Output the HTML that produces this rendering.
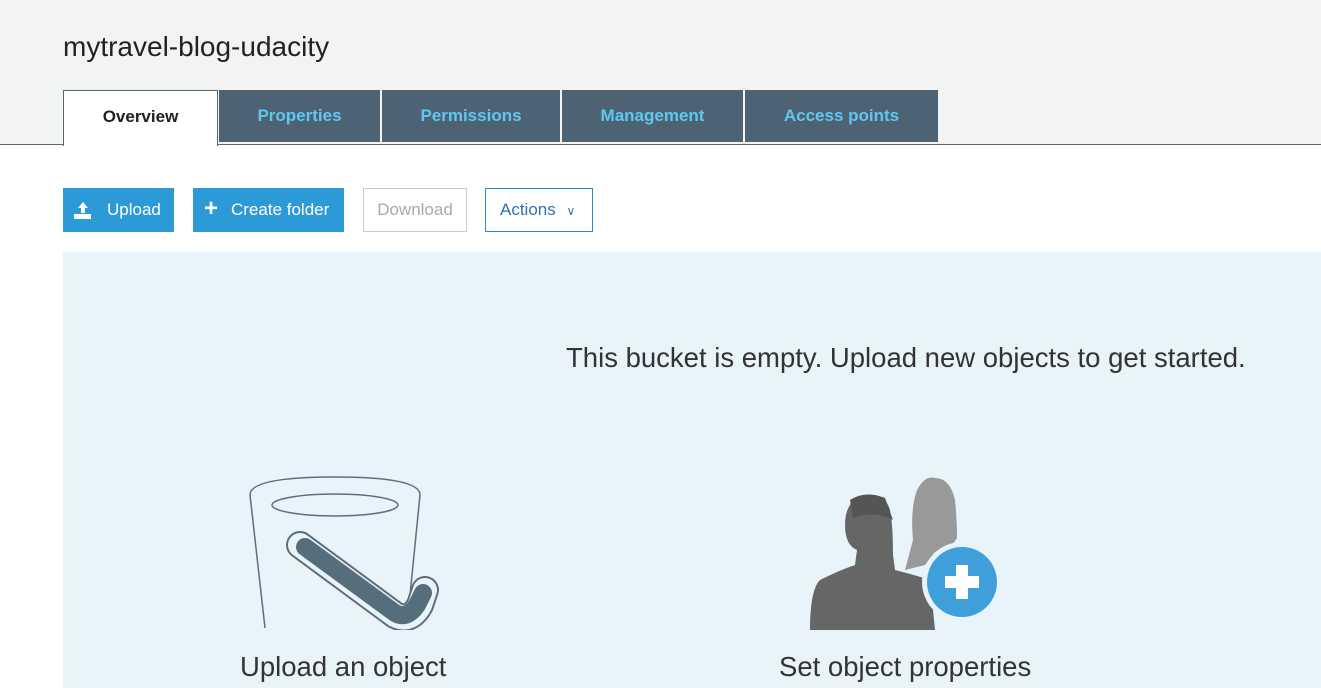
<!DOCTYPE html>
<html><head><style>
body{margin:0;width:1321px;height:688px;overflow:hidden;font-family:"Liberation Sans",Arial,sans-serif;background:#fff;position:relative}
.hdr{position:absolute;left:0;top:0;width:1321px;height:144px;background:#f2f3f3;border-bottom:1px solid #546879}
.title{position:absolute;left:63px;top:31px;font-size:28px;color:#222}
.tab{position:absolute;top:90px;height:52px;background:#4d6373;color:#5ec8f0;font-weight:bold;font-size:17px;text-align:center;line-height:52px}
.ov{position:absolute;left:63px;top:90px;width:153px;height:55px;background:#fff;border:1px solid #546879;border-bottom:none;text-align:center;line-height:52px;font-weight:bold;font-size:17px;color:#222}
.btn{position:absolute;top:188px;height:44px;line-height:44px;font-size:17px;box-sizing:border-box}
.blue{background:#2d9ad8;color:#fff}
.panel{position:absolute;left:63px;top:252px;width:1258px;height:436px;background:#e9f3fa}
.t{position:absolute;color:#333}
</style></head><body>
<div class="hdr"></div>
<div class="title">mytravel-blog-udacity</div>
<div class="ov">Overview</div>
<div class="tab" style="left:219px;width:161px">Properties</div>
<div class="tab" style="left:382px;width:178px">Permissions</div>
<div class="tab" style="left:562px;width:181px">Management</div>
<div class="tab" style="left:745px;width:193px">Access points</div>

<div class="btn blue" style="left:63px;width:111px">
<svg style="position:absolute;left:10px;top:12px" width="20" height="20" viewBox="0 0 20 20"><path d="M10 2l-5 6h3v5h4V8h3z" fill="#fff"/><rect x="1" y="14" width="17" height="5" fill="#fff"/></svg>
<span style="position:absolute;left:44px">Upload</span></div>
<div class="btn blue" style="left:193px;width:151px">
<span style="position:absolute;left:11px;font-size:24px;font-weight:bold;top:-1px">+</span>
<span style="position:absolute;left:38px">Create folder</span></div>
<div class="btn" style="left:363px;width:104px;border:1px solid #ccc;color:#aaa;text-align:center;line-height:42px">Download</div>
<div class="btn" style="left:485px;width:108px;border:1px solid #2e8bc9;color:#2e73b8;line-height:42px;padding-left:14px">Actions <span style="font-size:12px;margin-left:6px">&#x2228;</span></div>

<div class="panel"></div>
<div class="t" style="left:566px;top:342px;font-size:27.5px">This bucket is empty. Upload new objects to get started.</div>

<svg style="position:absolute;left:245px;top:475px" width="200" height="155" viewBox="0 0 200 155">
<path d="M5 20 Q5 2 90 2 Q175 2 175 20 L165 120 M5 20 L20 153" fill="none" stroke="#5d6f7c" stroke-width="1.5"/>
<ellipse cx="90" cy="30" rx="63" ry="11" fill="none" stroke="#5d6f7c" stroke-width="1.5"/>
<path d="M55 70 L150 140 Q165 148 175 130 L180 115" fill="none" stroke="#5d6f7c" stroke-width="28" stroke-linecap="round"/>
<path d="M55 70 L150 140 Q165 148 175 130 L180 115" fill="none" stroke="#e9f3fa" stroke-width="24" stroke-linecap="round"/>
<path d="M60 72 L150 138 Q162 145 172 130 L178 118" fill="none" stroke="#566d7b" stroke-width="18" stroke-linecap="round"/>
</svg>
<div class="t" style="left:240px;top:651px;font-size:27.5px">Upload an object</div>

<svg style="position:absolute;left:805px;top:470px" width="200" height="160" viewBox="0 0 200 160">
<path d="M108 70 Q105 40 112 20 Q120 5 130 8 Q145 8 150 30 Q152 50 152 68 Q145 80 130 82 L120 95 L100 100 Z" fill="#999"/>
<path d="M88 85 L90 100 Q110 105 125 110 L130 160 L5 160 Q5 120 15 110 Q35 100 50 95 L52 80 Q40 75 40 55 Q40 30 60 25 Q80 22 85 40 Q88 55 88 85 Z" fill="#666"/>
<path d="M45 30 Q60 20 80 28 L88 50 Q70 40 48 48 Z" fill="#555"/>
<circle cx="157" cy="112" r="40" fill="#e9f3fa"/>
<circle cx="157" cy="112" r="35" fill="#3f9fdb"/>
<path d="M151 95h12v11h11v12h-11v11h-12v-11h-11v-12h11z" fill="#fff"/>
</svg>
<div class="t" style="left:779px;top:651px;font-size:27.5px">Set object properties</div>
</body></html>
